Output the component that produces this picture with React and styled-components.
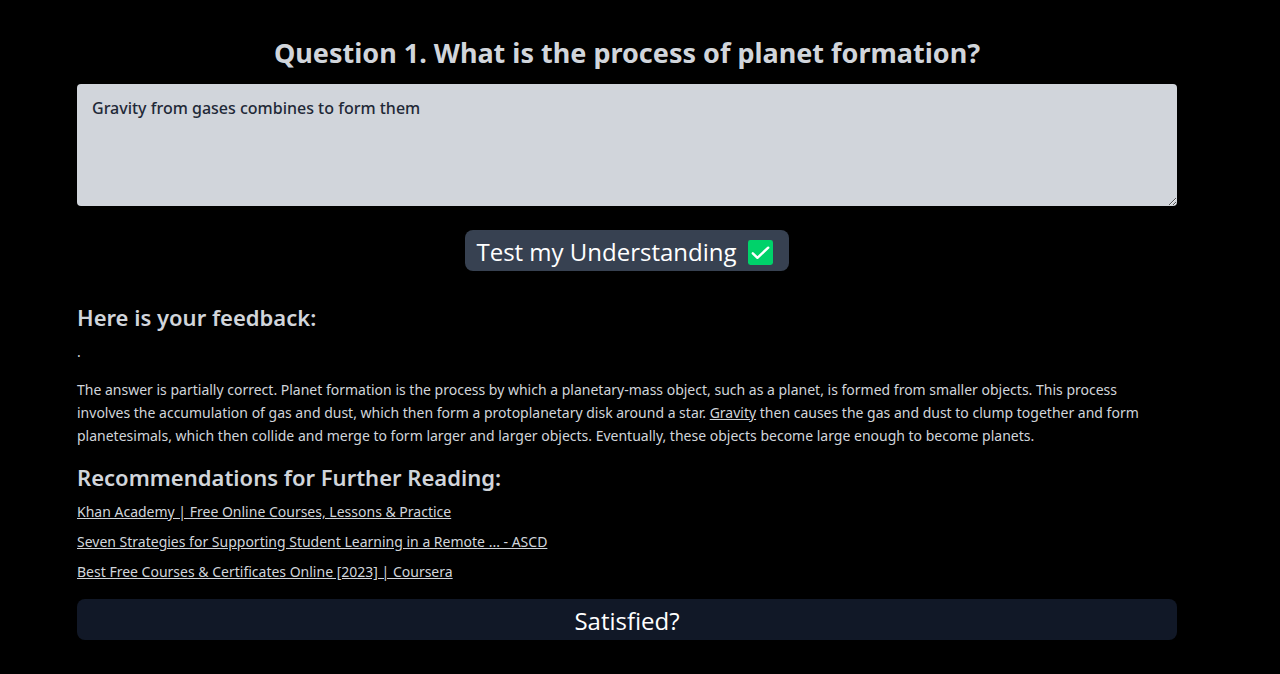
import React from "react";
import styled, { createGlobalStyle } from "styled-components";

const GlobalStyle = createGlobalStyle`
  * { box-sizing: border-box; }
  body {
    margin: 0;
    background: #000;
    color: #d1d5db;
    font-family: "Noto Sans", "Open Sans", sans-serif;
  }
`;

const Page = styled.main`
  display: flex;
  flex-direction: column;
  padding: 32px 103px 34px 77px;
`;

const Title = styled.h1`
  margin: 0 0 10px;
  font-size: 27px;
  line-height: 42px;
  font-weight: 700;
  text-align: center;
`;

const Answer = styled.textarea`
  display: block;
  width: 100%;
  height: 122px;
  padding: 11px 15px;
  border: 0;
  border-radius: 4px;
  background: #d1d5db;
  color: #1f2937;
  font: 500 16px/26px "Noto Sans", "Open Sans", sans-serif;
  resize: vertical;
`;

const Button = styled.button`
  display: flex;
  align-items: center;
  justify-content: center;
  gap: 11px;
  height: 41px;
  padding: ${(p) => (p.$wide ? "3px 12px 0" : "3px 16px 0 11px")};
  border: 0;
  border-radius: 8px;
  background: ${(p) => (p.$wide ? "#111827" : "#374151")};
  color: #fff;
  font: 400 24px/36px "Open Sans", "Noto Sans", sans-serif;
  align-self: ${(p) => (p.$wide ? "stretch" : "center")};
  margin: ${(p) => (p.$wide ? "12px 0 0" : "24px 0 29px")};
`;

const Heading = styled.h2`
  margin: 0;
  font-size: 22px;
  line-height: 34px;
  font-weight: 600;
`;

const Text = styled.p`
  margin: 6px 0 0;
  font-size: 14px;
  line-height: 23px;
`;

const Feedback = styled(Text)`
  margin: 15px 0 13px;
  padding-right: 12px;
`;

const Link = styled.a`
  color: inherit;
  text-decoration: underline;
`;

const Readings = styled.ul`
  margin: 3px 0 0;
  padding: 0;
  list-style: none;
  font-size: 14px;
  line-height: 30px;
`;

const readings = [
  "Khan Academy | Free Online Courses, Lessons & Practice",
  "Seven Strategies for Supporting Student Learning in a Remote ... - ASCD",
  "Best Free Courses & Certificates Online [2023] | Coursera",
];

function CheckIcon() {
  return (
    <svg width="25" height="25" viewBox="0 0 26 26" aria-hidden="true">
      <rect width="26" height="26" rx="2.5" fill="#00d26a" />
      <path d="M5 13.8l4.8 4.7L21 8" fill="none" stroke="#fff" strokeWidth="2.5" strokeLinecap="round" strokeLinejoin="round" />
    </svg>
  );
}

export default function App() {
  return (
    <>
      <GlobalStyle />
      <Page>
        <Title id="question">Question 1. What is the process of planet formation?</Title>
        <Answer aria-labelledby="question" spellCheck={false} defaultValue="Gravity from gases combines to form them" />
        <Button type="button">
          Test my Understanding
          <CheckIcon />
        </Button>
        <Heading>Here is your feedback:</Heading>
        <Text>.</Text>
        <Feedback>
          The answer is partially correct. Planet formation is the process by which a planetary-mass object, such as a planet, is formed from smaller objects. This process involves the accumulation of gas and dust, which then form a protoplanetary disk around a star. <Link href="#gravity">Gravity</Link> then causes the gas and dust to clump together and form planetesimals, which then collide and merge to form larger and larger objects. Eventually, these objects become large enough to become planets.
        </Feedback>
        <Heading>Recommendations for Further Reading:</Heading>
        <Readings>
          {readings.map((title) => (
            <li key={title}>
              <Link href="#reading">{title}</Link>
            </li>
          ))}
        </Readings>
        <Button type="button" $wide>Satisfied?</Button>
      </Page>
    </>
  );
}
